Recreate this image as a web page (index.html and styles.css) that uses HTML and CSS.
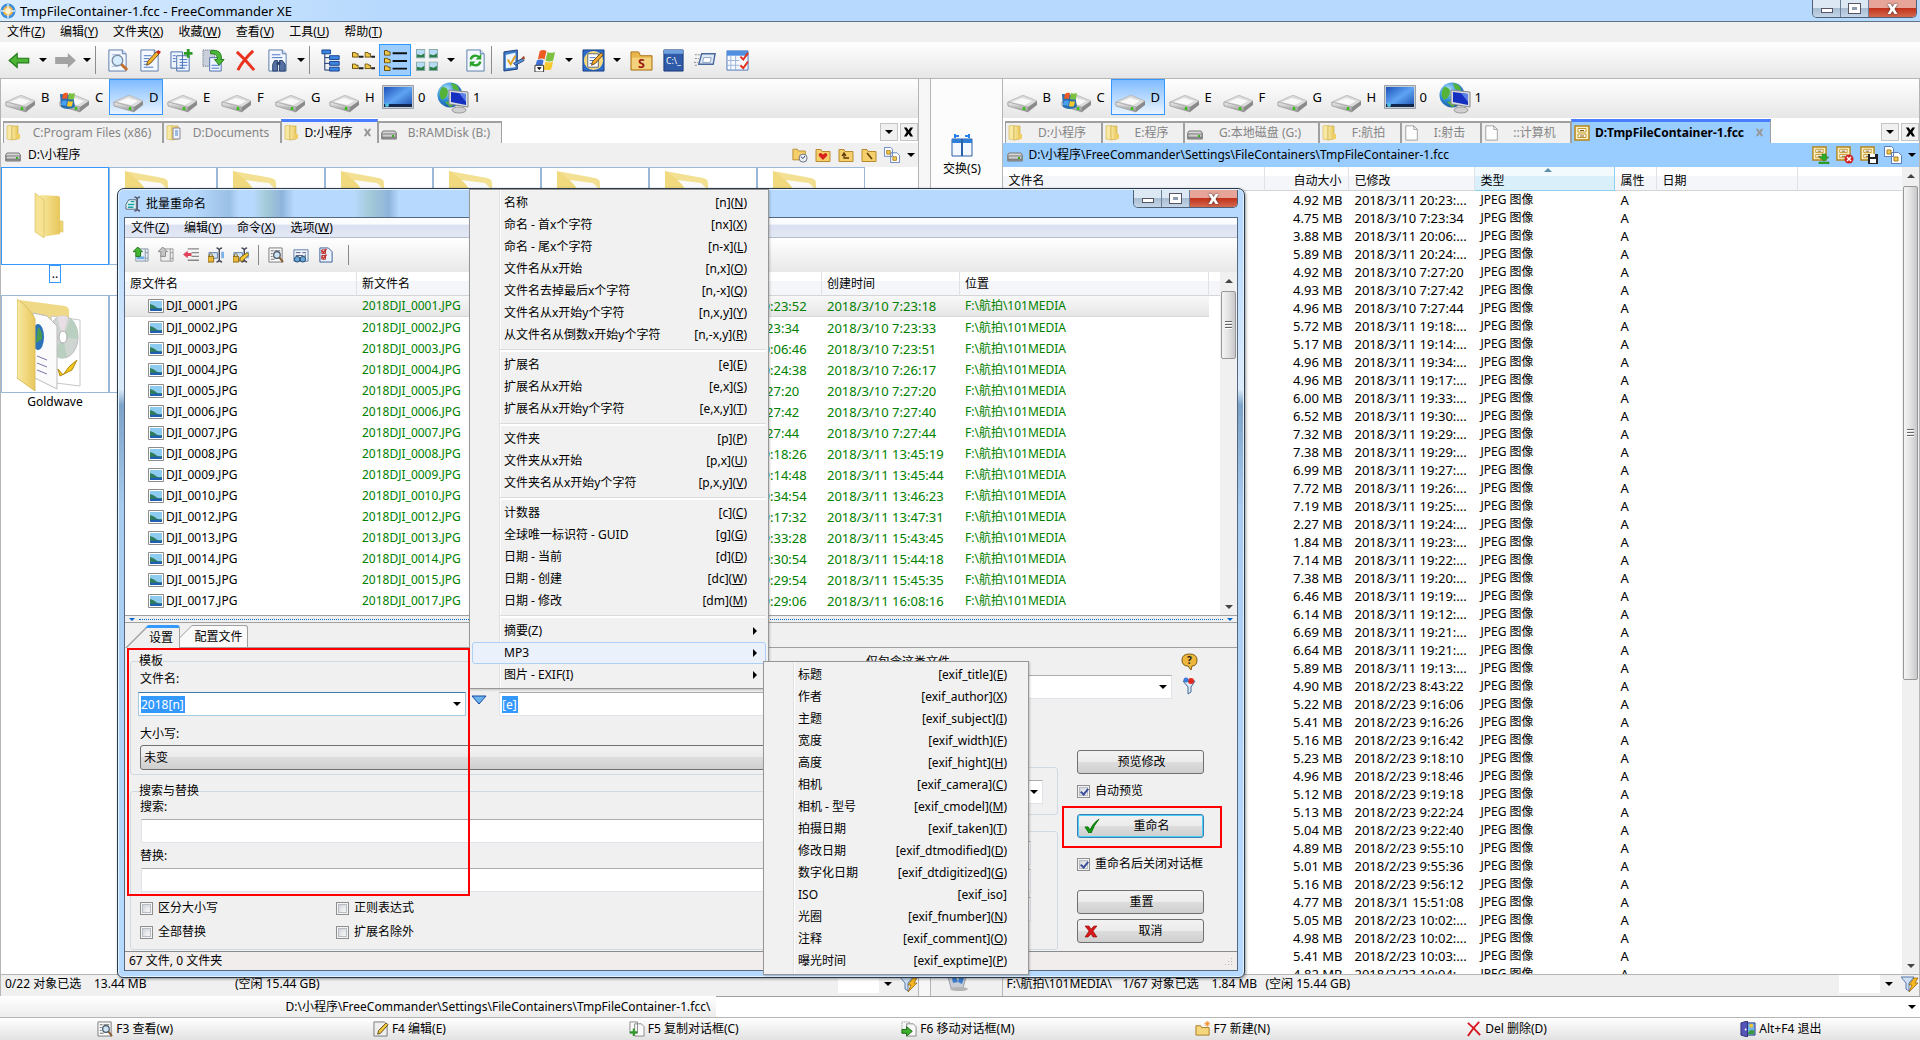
FILE: index.html
```html
<!DOCTYPE html>
<html lang="zh-CN">
<head>
<meta charset="utf-8">
<title>TmpFileContainer-1.fcc - FreeCommander XE</title>
<link rel="stylesheet" href="styles.css">
</head>
<body>
<svg class="defs" aria-hidden="true">
  <defs>
    <linearGradient id="gFolder" x1="0" y1="0" x2="1" y2="0"><stop offset="0" stop-color="#f8e9a0"/><stop offset="1" stop-color="#e8c75c"/></linearGradient>
    <linearGradient id="gMetal" x1="0" y1="0" x2="0" y2="1"><stop offset="0" stop-color="#f4f4f4"/><stop offset="1" stop-color="#8d8d8d"/></linearGradient>
    <linearGradient id="gBlue" x1="0" y1="0" x2="1" y2="1"><stop offset="0" stop-color="#1d52b8"/><stop offset=".5" stop-color="#5fa4f4"/><stop offset="1" stop-color="#1b4fae"/></linearGradient>
    <radialGradient id="gGlobe" cx=".35" cy=".3" r=".8"><stop offset="0" stop-color="#bfe9ff"/><stop offset=".5" stop-color="#2f8fd8"/><stop offset="1" stop-color="#134a96"/></radialGradient>
  </defs>
  <symbol id="app" viewBox="0 0 16 16"><circle cx="8" cy="8" r="7.5" fill="#3b8fdc"/><circle cx="8" cy="8" r="5" fill="#f7b545"/><circle cx="8" cy="8" r="3" fill="#fff3d0"/><path d="M8 1v4M8 11v4M1 8h4M11 8h4" stroke="#d9efff" stroke-width="1.5"/></symbol>
  <symbol id="back" viewBox="0 0 20 20"><path d="M1 10 8 4V8h10v4H8v4z" fill="#4db535" stroke="#1f7a15"/></symbol>
  <symbol id="fwd" viewBox="0 0 20 20"><path d="M19 10 12 3.500V7H1v6h11v3.500z" fill="#a3a3a3"/></symbol>
  <symbol id="page" viewBox="0 0 22 24"><path d="M2 1h14l4 4v18H2z" fill="#f3f8ff" stroke="#5b7ba8"/><path d="M16 1v4h4" fill="#cfe0f5" stroke="#5b7ba8"/></symbol>
  <symbol id="view" viewBox="0 0 22 24"><use href="#page"/><path d="M5 6h9M5 9h4M5 18h6" stroke="#9ab7e0"/><circle cx="11" cy="12" r="5.500" fill="#d5edff" stroke="#7f8fa3" stroke-width="1.500"/><path d="m15 16 6 6" stroke="#c0702c" stroke-width="3"/></symbol>
  <symbol id="edit" viewBox="0 0 22 24"><use href="#page"/><path d="M5 7h8M5 10h6M5 13h5M5 16h4M5 19h10" stroke="#4a73c4"/><path d="m8 17 1-4L18 3l3 2L12 15z" fill="#f3b32f" stroke="#6a4a1a"/><path d="m18 3 2-2 3 2-2 2.500z" fill="#c8281e"/></symbol>
  <symbol id="copy" viewBox="0 0 24 24"><path d="M1 3h12v17H1zM7 7h13v16H7z" fill="#eef5ff" stroke="#4a6ea8"/><path d="M10 11h8M10 14h8M10 17h8M10 20h6M3 7h3M3 10h3M3 13h3" stroke="#4a73c4"/><path d="M19 0v9M14.500 4.500h9" stroke="#2d9a25" stroke-width="3"/></symbol>
  <symbol id="move" viewBox="0 0 24 24"><path d="M1 1h12v17H1z" fill="#c9d0dc" stroke="#5a6778" stroke-dasharray="1 1"/><path d="M8 9h12v14H8z" fill="#eef5ff" stroke="#4a6ea8"/><path d="M10 17h8M10 20h8" stroke="#4a73c4"/><path d="M9 2c8-2 12 2 11 9h3l-5 6-5-6h3c0-5-2-6-7-6z" fill="#4bb83a" stroke="#1f7a15"/></symbol>
  <symbol id="del" viewBox="0 0 22 24"><path d="M2 3q9 8 18 19M19 2Q9 11 3 22" stroke="#e8321e" stroke-width="3" fill="none"/></symbol>
  <symbol id="find" viewBox="0 0 22 24"><use href="#page"/><path d="M5 6h9M5 9h11" stroke="#4a73c4"/><path d="M6 23V16l2-4h3v11zM13 23V12h3l3 4v7z" fill="#5672a5" stroke="#2a3f6b"/><path d="M10 15h4" stroke="#2a3f6b" stroke-width="3"/></symbol>
  <symbol id="tree" viewBox="0 0 22 24"><path d="M4 4v18h5M4 9h5M4 15h5" stroke="#14306e" fill="none"/><path d="M1 1h9v4H1zM9 7h10v4H9zM9 13h10v4H9zM9 19h10v4H9z" fill="#3d86e0" stroke="#17408f"/></symbol>
  <symbol id="fold" viewBox="0 0 7 6"><path d="M.5 5.500v-5h3l1 1.500h2v3.500z" fill="#f0c648" stroke="#5b4508"/></symbol>
  <symbol id="brief" viewBox="0 0 24 22"><use href="#fold" x="0" y="2" width="7" height="6"/><use href="#fold" x="13" y="2" width="7" height="6"/><use href="#fold" x="0" y="14" width="7" height="6"/><use href="#fold" x="13" y="14" width="7" height="6"/><path d="M7 7h5M20 7h4M7 19h5M20 19h4" stroke="#222" stroke-width="2"/></symbol>
  <symbol id="list" viewBox="0 0 24 22"><use href="#fold" x="0" y="0" width="7" height="6"/><use href="#fold" x="0" y="8" width="7" height="6"/><use href="#fold" x="0" y="16" width="7" height="6"/><path d="M9 3.500h15M9 11.500h15M9 19.500h15" stroke="#111" stroke-width="2"/></symbol>
  <symbol id="mini" viewBox="0 0 9 9"><path d="M.5.5h8v8h-8z" fill="#b9dcf6" stroke="#8aa"/><path d="M1 8V5l4 1 3-2v4z" fill="#2c7d45"/></symbol>
  <symbol id="thumbs" viewBox="0 0 22 22"><use href="#mini" width="9" height="9"/><use href="#mini" x="12" width="9" height="9"/><use href="#mini" y="12" width="9" height="9"/><use href="#mini" x="12" y="12" width="9" height="9"/></symbol>
  <symbol id="refresh" viewBox="0 0 22 24"><use href="#page"/><path d="M6 11c1-5 7-5 9-2M16 13c-1 5-7 5-9 2" stroke="#29a32a" stroke-width="2.500" fill="none"/><path d="M17 5v6h-6zM5 19v-6h6z" fill="#29a32a"/></symbol>
  <symbol id="check" viewBox="0 0 24 24"><path d="M2 3 16 1v20L2 23z" fill="#3d7cc9" stroke="#1d3e78"/><path d="m4 6 10-2v15L4 20z" fill="#eef6ff"/><path d="m6 11 3 5 5-9" stroke="#e0a020" stroke-width="2" fill="none"/><path d="m12 15 9-5 2 2-9 5z" fill="#5b93d8" stroke="#27497e"/><path d="m20 10 3-3 1 4z" fill="#a04020"/></symbol>
  <symbol id="win" viewBox="0 0 24 24"><path d="m6 2q4-2 7 0l-2 9q-3-2-7 0z" fill="#ee5a24"/><path d="m14 3q4 2 8 0l-2 9q-4 2-8 0z" fill="#7cc142"/><path d="m3 12q4-2 7 0l-2 8q-3-2-7 0z" fill="#3f6fd8"/><path d="m12 13q4 2 8 0l-2 8q-4 2-8 0z" fill="#f8c92c"/><path d="M1 17h9v7H1z" fill="#fff" stroke="#333"/><path d="M3 19h5l-2.500 3z"/></symbol>
  <symbol id="note" viewBox="0 0 24 24"><path d="M1 1h22v22H1z" fill="#2d6cc8" stroke="#173e86"/><circle cx="12" cy="12" r="10" fill="#f8da7c"/><path d="M6 5h11v14H6z" fill="#fff" stroke="#567"/><path d="M8 9h6M8 12h5M8 15h4" stroke="#4a73c4"/><path d="m10 17 1-4 9-9 2 2-8 9z" fill="#f3a82f" stroke="#6a4a1a"/></symbol>
  <symbol id="sfolder" viewBox="0 0 24 24"><path d="M1 22V3h8l2 4h12v15z" fill="#e9b64b" stroke="#a8741b"/><path d="M2 21V9h20v12z" fill="#f5d27e"/><text x="12" y="20" text-anchor="middle" font-size="13" font-weight="700" font-family="Noto Sans, sans-serif" fill="#9b1b10">S</text></symbol>
  <symbol id="cmd" viewBox="0 0 22 24"><path d="M1 1h20v22H1z" fill="#2f5aa8" stroke="#1c3a78"/><path d="M1 1h20v4H1z" fill="#6fa0e0"/><text x="11" y="16" text-anchor="middle" font-size="9" font-family="Noto Sans, sans-serif" fill="#fff">C:\_</text></symbol>
  <symbol id="ghost" viewBox="0 0 24 20"><path d="M8 3h14l-2 11H5z" fill="#dfe9f6" stroke="#4b6a9b" stroke-width="1.500"/><path d="M10 7h8l-1 5H9z" fill="#fff" stroke="#8aa2c4"/><path d="M1 4h5M1 8h4M0 12h4M1 15h3" stroke="#888" stroke-dasharray="2 1"/></symbol>
  <symbol id="cal" viewBox="0 0 24 24"><path d="M1 2h22v20H1z" fill="#f6faff" stroke="#4a76b8"/><path d="M1 2h22v5H1z" fill="#4f8ee0"/><path d="M1 12h13M1 17h13M5 7v15M10 7v15" stroke="#9bb4d8"/><path d="m15 8 3 3 5-7M15 17l3 3 5-7" stroke="#e0301e" stroke-width="2" fill="none"/></symbol>
  <symbol id="drive" viewBox="0 0 30 24"><path d="M1 12 14 6q2-1 4 0l12 5-9 7-20-3z" fill="#dcdcdc" stroke="#adadad" stroke-width=".7"/><path d="M5 12 15 8l10 3-7 4z" fill="#f9f9f9"/><path d="M1 12v4l20 6v-5z" fill="url(#gMetal)" stroke="#999" stroke-width=".7"/><path d="m21 17 9-6v4l-9 7z" fill="#8a8a8a"/><path d="M17 17v3" stroke="#3cc01a" stroke-width="2.500"/></symbol>
  <symbol id="cdrive" viewBox="0 0 30 24"><use href="#drive"/><path d="M1 4 14 5l2 12q-8 4-14 0z" fill="#2a6fb0"/><path d="m4 4q2-2 5-1l-1 6q-3-1-5 0z" fill="#ee5a24"/><path d="m10 3q3 1 6 0l-1 6q-3 1-6 0z" fill="#7cc142"/><path d="m3 11q2-1 5 0l-1 5q-2-1-5-1z" fill="#4aa0f0"/><path d="m9 11q3 1 5 0l-1 5q-2 1-5 0z" fill="#f8c92c"/></symbol>
  <symbol id="mon" viewBox="0 0 32 24"><path d="M.5.5h31v23H.5z" fill="#c9cdd4" stroke="#9aa0a8"/><path d="M2 2h28v20H2z" fill="url(#gBlue)"/><path d="M2 19h28v3H2z" fill="#12284e"/><circle cx="5" cy="20" r="2" fill="#50c0e0"/></symbol>
  <symbol id="net" viewBox="0 0 32 32"><circle cx="13" cy="13" r="12.500" fill="url(#gGlobe)"/><path d="M5 5q6 0 6 5t-6 8q-5-6 0-13zM14 1q8 1 8 8l-6-2zM8 20q5-2 8 4l-3 1z" fill="#55b33a"/><path d="m12 8 19 2v15l-19-3z" fill="#d8dce2" stroke="#888"/><path d="m14 10 15 2v11l-15-3z" fill="#1530c0"/><path d="m22 11 7 1v8z" fill="#5a80e8"/><ellipse cx="22" cy="28" rx="7" ry="3" fill="#d0d0d0" stroke="#999"/></symbol>
  <symbol id="hd" viewBox="0 0 16 16"><path d="M2 6h12l2 3v4q0 1-1 1H1q-1 0-1-1V9z" fill="#d8d8d8" stroke="#777"/><path d="M1 9h14v4H1z" fill="url(#gMetal)" stroke="#6f6f6f"/><path d="M11 10h2v2h-2z" fill="#39b01b"/></symbol>
  <symbol id="fold16" viewBox="0 0 16 16"><path d="M1 1 6 0v15l-5-1z" fill="#f7e9a4" stroke="#d9bc5c" stroke-width=".7"/><path d="M6 1h6v13l-6 1z" fill="url(#gFolder)" stroke="#d0ae48" stroke-width=".7"/><path d="M11 9h3v5h-3z" fill="#f0cf62"/></symbol>
  <symbol id="doc16" viewBox="0 0 16 16"><use href="#fold16"/><path d="M7 3h7v11H7z" fill="#eef4fb" stroke="#889"/><path d="M9 6h3M9 8h3M9 10h3" stroke="#4a80c0"/></symbol>
  <symbol id="blank" viewBox="0 0 16 18"><path d="M1 1h9l4 4v12H1z" fill="#fff" stroke="#9a9a9a"/><path d="M10 1v4h4" fill="none" stroke="#9a9a9a"/></symbol>
  <symbol id="cab" viewBox="0 0 16 16"><path d="M1 1h14v14H1z" fill="#fdf1c4" stroke="#b48518" stroke-width="1.500"/><path d="M4 3.500h8v3.500H4zM4 9h8v3.500H4z" fill="#fff" stroke="#c2982e"/><path d="M6 5.500h4M6 11h4" stroke="#7a5a12"/></symbol>
  <symbol id="cabdown" viewBox="0 0 18 18"><use href="#cab" width="15" height="15"/><path d="M10 8h4v3h3l-5 4-5-4h3zM7 16h10v2H7z" fill="#2fae25" stroke="#156b10" stroke-width=".5"/></symbol>
  <symbol id="cabx" viewBox="0 0 18 18"><use href="#cab" width="15" height="15"/><circle cx="13" cy="13" r="4.500" fill="#d02222"/><path d="m11 11 4 4m0-4-4 4" stroke="#fff" stroke-width="1.500"/></symbol>
  <symbol id="cabs" viewBox="0 0 18 18"><use href="#cab" width="15" height="15"/><path d="M8 8h10v10H8z" fill="#222"/><path d="M10 8h5v3h-5zM10 13h6v4h-6z" fill="#fff"/></symbol>
  <symbol id="fy" viewBox="0 0 16 16"><path d="M1 14.500V2.500h5l1 2h8v10z" fill="#f4cf6a" stroke="#b88b2e"/></symbol>
  <symbol id="fclock" viewBox="0 0 18 18"><use href="#fy" width="16" height="16"/><circle cx="12.500" cy="12.500" r="4.500" fill="#e9f1fa" stroke="#667"/><path d="m10 11 2.500 2 2-3" stroke="#335" fill="none"/></symbol>
  <symbol id="fheart" viewBox="0 0 16 16"><use href="#fy"/><path d="M8 13 4 9q-1-3 2-3l2 1.500L10 6q3 0 2 3z" fill="#d8221e"/></symbol>
  <symbol id="fup" viewBox="0 0 16 16"><use href="#fy"/><path d="M6 7v4h5M4 9l2-3 2 3" stroke="#5b3a08" fill="none" stroke-width="1.300"/></symbol>
  <symbol id="froot" viewBox="0 0 16 16"><use href="#fy"/><path d="m6 6 5 6" stroke="#5b3a08" stroke-width="1.500"/></symbol>
  <symbol id="dup" viewBox="0 0 18 18"><path d="M.5.5h7l2 2v8h-9zM7.500 6.500h7l3 3v8h-10z" fill="#fff" stroke="#5a7cb8"/><path d="M3 4h4v4H3zM10 11h4v4h-4z" fill="#f6cf50" stroke="#a87b22"/></symbol>
  <symbol id="swap" viewBox="0 0 22 24"><path d="M1 6h20v17H1z" fill="#f3f8fe" stroke="#2a5faa"/><path d="M1 6h20v4H1z" fill="#2f7ed8"/><path d="M11 6v17" stroke="#2a5faa" stroke-width="2"/><path d="M4 5V1M4 3h4M18 5V1M18 3h-4" stroke="#2583f0" stroke-width="2"/></symbol>
  <symbol id="bin" viewBox="0 0 24 14"><path d="M3 0h18l-3 11q-6 4-12 0z" fill="#c8ccd4" stroke="#9a9ea6"/><path d="m7 1 4-1 2 5-5 1zM14 1h5l-2 6-4-2z" fill="#3f7fd0"/><ellipse cx="14" cy="12" rx="9" ry="2" fill="#b4b4b4"/></symbol>
  <symbol id="filter" viewBox="0 0 18 18"><path d="M0 2h13L8 8v8l-3-2V8z" fill="#cfe0f4" stroke="#5b7ba8"/><path d="m13 3-5 7h3l-3 7 9-9h-3l3-5z" fill="#f8b81e" stroke="#8e5c08" stroke-width=".7"/></symbol>
  <symbol id="ren" viewBox="0 0 17 17"><path d="M4 4h8v10H1V9z" fill="#e8f6f8" stroke="#567"/><path d="M3 9h7M3 12h6M6 6h4" stroke="#16a0a8" stroke-width="1.500"/><path d="M10 1q2 0 3 2 1-2 3-2M10 16q2 0 3-2 1 2 3 2M13 3v11" stroke="#556" stroke-width="1.500" fill="none"/></symbol>
  <symbol id="d1" viewBox="0 0 17 17"><path d="M5 2h11v13H3V9" fill="#e8eef4" stroke="#8a98a8"/><path d="M13 2v13M13 6h3M13 12h3" stroke="#8a98a8"/><path d="M4 10h8v3H4z" fill="#6fb0e8"/><path d="M5 0 0 5h3v5h5V5h2z" fill="#44b432" stroke="#1c7414"/></symbol>
  <symbol id="d2" viewBox="0 0 17 17"><path d="M5 2h11v13H3V9" fill="#ededed" stroke="#999"/><path d="M13 2v13M13 6h3M13 12h3" stroke="#999"/><path d="M5 0 0 5h3v5h5V5h2z" fill="#c4c4c4" stroke="#888"/></symbol>
  <symbol id="d3" viewBox="0 0 17 17"><path d="M5 2h12M9 6h8M9 10h8M5 14h12" stroke="#888" stroke-width="1.500"/><path d="M0 8 5 4v2.500h4v3H5V12z" fill="#e04058"/></symbol>
  <symbol id="d4" viewBox="0 0 17 17"><path d="M1 6h9v6H1z" fill="#d5e6f8" stroke="#567ba8"/><path d="M9 1q2 0 3 2 1-2 3-2M9 16q2 0 3-2 1 2 3 2M12 3v11" stroke="#445" stroke-width="1.500" fill="none"/><path d="M14 5h3v7h-3z" fill="#7fb2e8"/><path d="M0 10h6v6H0z" fill="#e8b93a" stroke="#8a6a14"/><path d="M1.500 10V8q1.500-2 3 0v2" stroke="#8a6a14" fill="none"/></symbol>
  <symbol id="d5" viewBox="0 0 17 17"><use href="#d4"/><path d="m7 15 1-4 7-5 2 2-7 7z" fill="#f5c838" stroke="#7a5a12"/></symbol>
  <symbol id="d6" viewBox="0 0 17 17"><path d="M1 1h14v15H1z" fill="#fafafa" stroke="#777"/><path d="M3 4h3M7 4h6M3 7h2M3 10h2M3 13h4" stroke="#666"/><circle cx="9.500" cy="8.500" r="3.500" fill="#cfe4f4" stroke="#456" stroke-width="1.300"/><path d="m12 11 4 5" stroke="#8a5a30" stroke-width="2"/></symbol>
  <symbol id="d7" viewBox="0 0 17 17"><path d="M1 3h15v12H1z" fill="#f1f7fd" stroke="#5b7ba8"/><path d="M3 6h5M10 6h4M3 9h8" stroke="#557"/><circle cx="4.500" cy="13" r="3" fill="#6aa6d8" stroke="#246"/><circle cx="10.500" cy="13" r="3" fill="#6aa6d8" stroke="#246"/><path d="M13 11V8" stroke="#246"/></symbol>
  <symbol id="d8" viewBox="0 0 17 17"><path d="M2 1h9l4 4v11H2z" fill="#eaf2fc" stroke="#3a5c98"/><path d="m4 4 2 2 3-4M4 10l2 2 3-4" stroke="#d82a1e" stroke-width="1.500" fill="none"/><path d="M4 3h4v4H4zM4 9h4v4H4z" fill="none" stroke="#a33"/></symbol>
  <symbol id="pic" viewBox="0 0 16 14"><path d="M.5.5h15v13H.5z" fill="#fff" stroke="#8c8c8c"/><path d="M2 2h12v10H2z" fill="#8ecbf0"/><path d="M2 5q4 1 6 3t6 1v3H2z" fill="#2e7e5a"/><path d="M2 10q6-1 12 0v2H2z" fill="#2160b0"/></symbol>
  <symbol id="help" viewBox="0 0 17 18"><path d="M8.500 1q7.500 0 7.500 6t-5 6l-1 4-3-4q-6 0-6-6t7.500-6z" fill="#eeb73c" stroke="#7d5a12"/><text x="8.500" y="11" text-anchor="middle" font-size="10" font-weight="700" font-family="Noto Sans, sans-serif" fill="#222">?</text></symbol>
  <symbol id="funnel" viewBox="0 0 14 18"><path d="M1 4h12L9 10v5l-3 2v-7z" fill="#dbe8f6" stroke="#456a9c"/><circle cx="9" cy="4" r="3" fill="#e02a20"/><circle cx="4" cy="3" r="2.500" fill="#3b7ad8"/></symbol>
  <symbol id="tick" viewBox="0 0 16 14"><path d="M1 8h3l2 3Q9 4 15 0q-5 6-8 14H5z" fill="#12a012" stroke="#087008"/></symbol>
  <symbol id="cross" viewBox="0 0 14 13"><path d="M1 1h4l2 3 3-3h3L9 6l4 6H9L7 9l-3 3H1l4-6z" fill="#d81818" stroke="#8c0c0c" stroke-width=".6"/></symbol>
  <symbol id="x" viewBox="0 0 12 10"><path d="M1 0h3l2 3 2-3h3L8 5l3 5H8L6 7l-2 3H1l3-5z" fill="currentColor"/></symbol>
  <symbol id="f3" viewBox="0 0 17 17"><use href="#d6"/></symbol>
  <symbol id="f4" viewBox="0 0 17 17"><path d="M1 1h11l3 3v12H1z" fill="#eee" stroke="#777"/><path d="m5 14 1-4 8-8 2 2-8 9z" fill="#f3c83a" stroke="#5a4a1a"/></symbol>
  <symbol id="f5" viewBox="0 0 17 17"><path d="M1 1h8v12H1zM6 3h7l3 3v10H6z" fill="#fafafa" stroke="#888"/><path d="M5 8v8M1 12h8" stroke="#2a9a20" stroke-width="2"/></symbol>
  <symbol id="f6" viewBox="0 0 17 17"><path d="M1 1h8v12H1z" fill="none" stroke="#888" stroke-dasharray="1 1"/><path d="M6 3h7l3 3v10H6z" fill="#fafafa" stroke="#888"/><path d="M1 9h5V6l6 5-6 5v-3H1z" fill="#3fb02c" stroke="#186c10"/></symbol>
  <symbol id="f7" viewBox="0 0 17 17"><path d="M1 15V5h5l1 2h8v8z" fill="#f5d67c" stroke="#a87b22"/><path d="M13 0v6M10 3h6M11 1l4 4M15 1l-4 4" stroke="#f08a1c"/></symbol>
  <symbol id="f8" viewBox="0 0 17 17"><path d="M2 2q7 6 13 13M14 1Q7 8 2 16" stroke="#d8141e" stroke-width="2" fill="none"/></symbol>
  <symbol id="exit" viewBox="0 0 17 17"><path d="M7 2h9v13H7z" fill="#6fb4e8" stroke="#3a3a88"/><path d="M8 14q2-6 7-4v4z" fill="#3a9a40"/><circle cx="12" cy="5" r="2" fill="#f4c430"/><path d="m1 2 7-2v17l-7-2z" fill="#5555b8" stroke="#2c2c78"/><circle cx="6" cy="9" r="1" fill="#fff"/></symbol>
  <symbol id="openf" viewBox="0 0 30 46"><path d="M6 2 24 3q2 0 2 2v36l-18 3z" fill="url(#gFolder)"/><path d="M1 0 10 7v38L1 39z" fill="#f6e293" stroke="#d8bc5a" stroke-width=".6"/><path d="M26 28h3v11h-3z" fill="#f2d978" stroke="#d8bc5a" stroke-width=".6"/></symbol>
  <symbol id="gold" viewBox="0 0 64 92"><path d="M2 1 48 7q4 1 4 5v16H20z" fill="#efd886"/><path d="M34 17l29 4v66l-24-3z" fill="#fff" stroke="#c8c8c8"/><ellipse cx="46" cy="38" rx="15" ry="21" fill="#cfd5d0" stroke="#bbb"/><path d="M46 38 54 19q8 8 7 21zM46 38 36 55q6 7 14 3z" fill="#b9cfc0"/><path d="M46 38 40 18q6-3 11 0z" fill="#e8dfe6"/><ellipse cx="46" cy="38" rx="4" ry="6" fill="#fff" stroke="#aaa"/><path d="m16 14 14 3 10 10v63L16 78z" fill="#fbfbfb" stroke="#bbb"/><ellipse cx="21" cy="38" rx="6" ry="13" fill="#2b72b8"/><path d="M21 28q5 4 4 12l-6 4z" fill="#4a9a50"/><path d="M20 57l10 4M20 64l10 4M20 71l10 4" stroke="#77a"/><path d="m41 70 5 6q5-9 14-15l-5 10-12 6z" fill="#f2c81e" stroke="#b08a10"/><path d="M0 0q14 10 18 20v72L0 79z" fill="url(#gFolder)" stroke="#dcc062"/></symbol>
  <symbol id="peek" viewBox="0 0 44 18"><path d="M0 0 38 7q5 1 5 5v6H0z" fill="#f3e092"/><path d="M12 9 36 12l6 6H20z" fill="#fafafa"/><path d="M0 0q15 9 20 18H0z" fill="#f0d97e"/></symbol>
</svg>

<div class="app">
  <header class="titlebar">
    <svg class="i16"><use href="#app"/></svg><span class="grow">TmpFileContainer-1.fcc - FreeCommander XE</span>
    <div class="winbtns"><button class="wb min" aria-label="最小化"><i></i></button><button class="wb max" aria-label="还原"><i></i></button><button class="wb close" aria-label="关闭"><svg width="13" height="10"><use href="#x"/></svg></button></div>
  </header>
  <nav class="menubar"><a href="#">文件(<u>Z</u>)</a><a href="#">编辑(<u>Y</u>)</a><a href="#">文件夹(<u>X</u>)</a><a href="#">收藏(<u>W</u>)</a><a href="#">查看(<u>V</u>)</a><a href="#">工具(<u>U</u>)</a><a href="#">帮助(<u>T</u>)</a></nav>
  <div class="toolbar" id="toolbar"></div>

  <main class="panes">
    <section class="pane left">
      <div class="drives"></div>
      <div class="tabs">
        <a href="#" class="tab t160"><svg class="i16"><use href="#fold16"/></svg><span>C:Program Files (x86)</span></a>
        <a href="#" class="tab t118"><svg class="i16"><use href="#doc16"/></svg><span>D:Documents</span></a>
        <a href="#" class="tab t97 on"><svg class="i16"><use href="#fold16"/></svg><span>D:小程序</span><b><svg width="9" height="9"><use href="#x"/></svg></b></a>
        <a href="#" class="tab t124"><svg class="i16"><use href="#hd"/></svg><span>B:RAMDisk (B:)</span></a>
        <span class="grow"></span><button class="tbtn" aria-label="标签列表"><i class="caret"></i></button><button class="tbtn" aria-label="关闭标签"><svg width="11" height="10"><use href="#x"/></svg></button>
      </div>
      <div class="path"><svg class="i16"><use href="#hd"/></svg><span class="grow">D:\小程序</span>
        <svg class="i16"><use href="#fclock"/></svg><svg class="i16"><use href="#fheart"/></svg><svg class="i16"><use href="#fup"/></svg><svg class="i16"><use href="#froot"/></svg><svg class="i16"><use href="#dup"/></svg><i class="caret"></i></div>
      <div class="thumbgrid">
        <figure class="sel"><div class="cell mid"><svg width="30" height="46"><use href="#openf"/></svg></div><figcaption>..</figcaption></figure>
        <figure><div class="cell"><svg width="44" height="18"><use href="#peek"/></svg></div></figure>
        <figure><div class="cell"><svg width="44" height="18"><use href="#peek"/></svg></div></figure>
        <figure><div class="cell"><svg width="44" height="18"><use href="#peek"/></svg></div></figure>
        <figure><div class="cell"><svg width="44" height="18"><use href="#peek"/></svg></div></figure>
        <figure><div class="cell"><svg width="44" height="18"><use href="#peek"/></svg></div></figure>
        <figure><div class="cell"><svg width="44" height="18"><use href="#peek"/></svg></div></figure>
        <figure><div class="cell"><svg width="44" height="18"><use href="#peek"/></svg></div></figure>
        <figure><div class="cell"><svg width="64" height="92"><use href="#gold"/></svg></div><figcaption>Goldwave</figcaption></figure>
        <figure><div class="cell"></div></figure>
      </div>
      <div class="status"><span class="w89">0/22 对象已选</span><span class="w141">13.44 MB</span><span class="grow">(空闲 15.44 GB)</span><span class="combo"><i class="caret"></i></span><svg class="i18"><use href="#filter"/></svg></div>
    </section>
    <div class="gutter"></div>
    <aside class="swapcol"><button><svg width="22" height="24"><use href="#swap"/></svg>交换(S)</button><div class="bin"><svg width="24" height="14"><use href="#bin"/></svg></div></aside>
    <section class="pane right">
      <div class="drives"></div>
      <div class="tabs">
        <a href="#" class="tab t97"><svg class="i16"><use href="#fold16"/></svg><span>D:小程序</span></a>
        <a href="#" class="tab t82"><svg class="i16"><use href="#fold16"/></svg><span>E:程序</span></a>
        <a href="#" class="tab t135"><svg class="i16"><use href="#hd"/></svg><span>G:本地磁盘 (G:)</span></a>
        <a href="#" class="tab t82"><svg class="i16"><use href="#fold16"/></svg><span>F:航拍</span></a>
        <a href="#" class="tab t80"><svg class="i16"><use href="#blank"/></svg><span>I:射击</span></a>
        <a href="#" class="tab t90"><svg class="i16"><use href="#blank"/></svg><span>::计算机</span></a>
        <a href="#" class="tab t200 on blue"><svg class="i16"><use href="#cab"/></svg><span>D:TmpFileContainer-1.fcc</span><b><svg width="9" height="9"><use href="#x"/></svg></b></a>
        <span class="grow"></span><button class="tbtn" aria-label="标签列表"><i class="caret"></i></button><button class="tbtn" aria-label="关闭标签"><svg width="11" height="10"><use href="#x"/></svg></button>
      </div>
      <div class="path active"><svg class="i16"><use href="#hd"/></svg><span class="grow">D:\小程序\FreeCommander\Settings\FileContainers\TmpFileContainer-1.fcc</span>
        <svg class="i18"><use href="#cabdown"/></svg><svg class="i18"><use href="#cabx"/></svg><svg class="i18"><use href="#cabs"/></svg><svg class="i18"><use href="#dup"/></svg><i class="caret"></i></div>
      <div class="listwrap">
        <div class="scrollbox">
          <table class="files">
            <colgroup><col class="c263"><col class="c84"><col class="c126"><col class="c140"><col class="c42"><col class="c141"><col></colgroup>
            <thead><tr><th>文件名</th><th class="num">自动大小</th><th>已修改</th><th class="sorted">类型</th><th>属性</th><th>日期</th><th></th></tr></thead>
            <tbody id="files"></tbody>
          </table>
        </div>
        <div class="vscroll"><i class="up"></i><div class="thumb big"></div><i class="down"></i></div>
      </div>
      <div class="status"><span class="w116">F:\航拍\101MEDIA\</span><span class="w89">1/67 对象已选</span><span class="w54">1.84 MB</span><span class="grow">(空闲 15.44 GB)</span><span class="combo"><i class="caret"></i></span><svg class="i18"><use href="#filter"/></svg></div>
    </section>
  </main>

  <div class="cmdline"><label for="cmdin">D:\小程序\FreeCommander\Settings\FileContainers\TmpFileContainer-1.fcc\</label><div class="cmdbox"><input id="cmdin" type="text"><i class="caret"></i></div></div>
  <footer class="fkeys">
    <button><svg class="i16"><use href="#f3"/></svg>F3 查看(w)</button><button><svg class="i16"><use href="#f4"/></svg>F4 编辑(E)</button><button><svg class="i16"><use href="#f5"/></svg>F5 复制对话框(C)</button><button><svg class="i16"><use href="#f6"/></svg>F6 移动对话框(M)</button><button><svg class="i16"><use href="#f7"/></svg>F7 新建(N)</button><button><svg class="i16"><use href="#f8"/></svg>Del 删除(D)</button><button><svg class="i16"><use href="#exit"/></svg>Alt+F4 退出</button>
  </footer>

  <div class="dialog" role="dialog" aria-label="批量重命名">
    <div class="dtitle"><svg class="i16"><use href="#ren"/></svg><span>批量重命名</span><div class="winbtns"><button class="wb min" aria-label="最小化"><i></i></button><button class="wb max" aria-label="最大化"><i></i></button><button class="wb close" aria-label="关闭"><svg width="13" height="10"><use href="#x"/></svg></button></div></div>
    <div class="client">
      <nav class="dmenu"><a href="#">文件(<u>Z</u>)</a><a href="#">编辑(<u>Y</u>)</a><a href="#">命令(<u>X</u>)</a><a href="#">选项(<u>W</u>)</a></nav>
      <div class="dtools"><svg class="i16"><use href="#d1"/></svg><svg class="i16"><use href="#d2"/></svg><svg class="i16"><use href="#d3"/></svg><svg class="i16"><use href="#d4"/></svg><svg class="i16"><use href="#d5"/></svg><i class="sep"></i><svg class="i16"><use href="#d6"/></svg><svg class="i16"><use href="#d7"/></svg><svg class="i16"><use href="#d8"/></svg><i class="sep"></i></div>
      <div class="dlist">
        <div class="dscroll">
          <table class="renames">
            <colgroup><col class="c232"><col class="c328"><col class="c137"><col class="c138"><col class="c249"><col></colgroup>
            <thead><tr><th>原文件名</th><th>新文件名</th><th>修改时间</th><th>创建时间</th><th>位置</th><th></th></tr></thead>
            <tbody id="renames"></tbody>
          </table>
        </div>
        <div class="vscroll"><i class="up"></i><div class="thumb small"></div><i class="down"></i></div>
      </div>
      <div class="splitter"><i class="caret"></i><span></span><i class="caret"></i></div>
      <div class="dtabs"><button class="dtab on">设置</button><button class="dtab">配置文件</button></div>
      <div class="settings">
        <div class="scol">
          <fieldset><legend>模板</legend>
            <label for="fname">文件名:</label>
            <div class="frow"><div class="box focus"><input id="fname" class="hl w44" type="text" value="2018[n]"><i class="caret"></i></div><button class="tri" aria-label="插入变量"><svg width="16" height="10"><path d="M1 1h14L8 9z" fill="#6bb4ee" stroke="#1648a0"/></svg></button><div class="box ext"><input class="hl w16" type="text" value="[e]" aria-label="扩展名"></div></div>
            <label for="case">大小写:</label>
            <select id="case"><option>未变</option></select>
          </fieldset>
          <fieldset class="second"><legend>搜索与替换</legend>
            <label for="srch">搜索:</label><input id="srch" class="text" type="text">
            <label for="repl">替换:</label><input id="repl" class="text" type="text">
            <div class="checks"><label><input type="checkbox">区分大小写</label><label><input type="checkbox">正则表达式</label><label><input type="checkbox">全部替换</label><label><input type="checkbox">扩展名除外</label></div>
          </fieldset>
        </div>
        <div class="rcol">
          <label for="only">仅包含这类文件</label>
          <div class="onlyrow"><div class="box"><input id="only" type="text"><i class="caret"></i></div><div class="two"><svg width="17" height="18"><use href="#help"/></svg><svg width="14" height="18"><use href="#funnel"/></svg></div></div>
          <div class="lower">
            <div class="mids"><div class="gb one"><div class="box"><input type="text" aria-label="日期"><i class="caret"></i></div></div><div class="gb three"><input class="text" type="text" aria-label="开始"><input class="text" type="text" aria-label="步长"><input class="text" type="text" aria-label="位数"></div></div>
            <div class="acts"><button class="btn">预览修改</button><label><input type="checkbox" checked>自动预览</label><button class="btn def"><svg width="16" height="14"><use href="#tick"/></svg><span>重命名</span></button><label><input type="checkbox" checked>重命名后关闭对话框</label><button class="btn">重置</button><button class="btn"><svg width="14" height="13"><use href="#cross"/></svg><span>取消</span></button></div>
          </div>
        </div>
      </div>
      <div class="dstatus"><span>67 文件, 0 文件夹</span><i class="grip"></i></div>
    </div>

    <ul class="menu m1" id="menu1"></ul>
    <ul class="menu m2" id="menu2"></ul>
    <div class="mark a"></div>
    <div class="mark b"></div>
  </div>
</div>
<script src="app.js"></script>
</body>
</html>
```
FILE: styles.css
```css
* { box-sizing: border-box; }
html, body { margin: 0; height: 100%; }
body { font: 12px/16px "Noto Sans", "Noto Sans CJK SC", sans-serif; color: #000; background: #f0f0f0; overflow: hidden; }
a { color: inherit; text-decoration: none; }
button, input, select { font: inherit; color: inherit; margin: 0; padding: 0; border: 0; background: none; }
svg { display: block; flex: none; }
.defs { position: absolute; width: 0; height: 0; }
.i16 { width: 16px; height: 16px; }
.i18 { width: 18px; height: 18px; }
.grow { flex: 1; }
.lat { font-size: 13px; }
.caret { width: 0; height: 0; border: 4px solid transparent; border-top-color: #000; border-bottom: 0; flex: none; }

.app { position: relative; height: 100vh; display: flex; flex-direction: column; }
.titlebar { height: 22px; flex: none; display: flex; align-items: center; gap: 4px; padding: 0 3px 0 0; font-size: 13px; background: linear-gradient(90deg, #dcedff, #b7d9fd 20%); border-bottom: 1px solid #5f7388; }
.winbtns { display: flex; align-self: flex-start; height: 18px; border: 1px solid #4d6078; border-top: 0; border-radius: 0 0 5px 5px; overflow: hidden; }
.wb { width: 28px; display: flex; align-items: center; justify-content: center; background: linear-gradient(#dce8f4 45%, #a9bdd2 50%, #c4d6e8); border-right: 1px solid #6b7f98; }
.wb.close { width: 47px; border: 0; color: #fff; background: linear-gradient(#e7a499 45%, #c2321c 50%, #d4694e); }
.wb.close svg { filter: drop-shadow(0 0 1px #333); }
.wb.min i { width: 12px; height: 5px; background: #fff; border: 1px solid #556; margin-top: 4px; }
.wb.max i { width: 11px; height: 9px; background: #8c9db0; border: 3px solid #fff; outline: 1px solid #556; }
.menubar { height: 20px; flex: none; display: flex; align-items: center; gap: 15px; padding: 0 7px; }
.toolbar { height: 37px; flex: none; display: flex; align-items: center; padding-left: 3px; background: linear-gradient(#fff, #e6e6e6); border-bottom: 1px solid #b5b5b5; }
.tool { width: 32px; height: 32px; display: flex; align-items: center; justify-content: center; border: 1px solid transparent; }
.tool.narrow { width: 28px; }
.tool.on { background: #9dceff; border-color: #3399ff; }
.drop { width: 16px; height: 32px; display: flex; align-items: center; justify-content: center; }
.tsep { width: 6px; height: 28px; border-left: 1px solid #8c8c8c; }

.panes { flex: 1; min-height: 0; display: flex; }
.pane { flex: 1 1 0; min-width: 0; display: flex; flex-direction: column; border: 1px solid #b5b5b5; border-width: 0 1px; }
.gutter { width: 11px; background: #f7f7f7; }
.swapcol { width: 72px; background: #fcfcfc; border-left: 1px solid #b5b5b5; display: flex; flex-direction: column; justify-content: space-between; padding-top: 54px; }
.swapcol button { display: flex; flex-direction: column; align-items: center; gap: 4px; padding-right: 8px; }
.bin { height: 19px; background: #f0f0f0; padding-left: 14px; }
.drives { height: 39px; flex: none; display: flex; background: linear-gradient(#fff, #e6e6e6); }
.drive { width: 54px; height: 36px; display: flex; padding: 9px 0 0 3px; gap: 6px; border: 1px solid transparent; font-size: 13px; }
.drive svg { margin-top: 1px; }
.drive.on { background: linear-gradient(#7fbcff, #eaf4ff); border-color: #3399ff; }
.drive.pc svg { margin-top: -4px; }
.drive.pc { padding-left: 2px; gap: 4px; }
.drive.net { padding-top: 5px; gap: 4px; }
.drive.net span { margin-top: 4px; }
.drive.net svg { margin-top: -3px; }
.tabs { height: 25px; flex: none; display: flex; align-items: flex-end; padding-left: 2px; background: #fff; }
.tab { height: 22px; display: flex; align-items: center; padding-left: 2px; background: #f0f0f0; border: 1px solid #a0a0a0; border-width: 2px 1px 0; color: #858585; overflow: hidden; }
.tab span { flex: 1; text-align: center; white-space: nowrap; }
.tab.on { height: 24px; color: #000; border-top: 3px solid #4a7dff; }
.tab.blue { background: #99ccff; font-weight: 700; }
.tab b { width: 20px; color: #999; display: flex; justify-content: center; }
.t160 { width: 160px; } .t118 { width: 118px; } .t97 { width: 97px; } .t124 { width: 124px; } .t82 { width: 82px; } .t135 { width: 135px; } .t80 { width: 80px; } .t90 { width: 90px; } .t200 { width: 200px; }
.tbtn { width: 18px; height: 18px; margin: 0 0 2px 2px; display: flex; align-items: center; justify-content: center; border: 1px solid #c4c4c4; background: #f0f0f0; }
.path { height: 24px; flex: none; display: flex; align-items: center; gap: 7px; padding: 0 3px 0 4px; }
.path.active { background: #99ccff; gap: 6px; }
.thumbgrid { flex: 1; min-height: 0; background: #fff; display: grid; grid-template-columns: repeat(8, 108px); grid-auto-rows: 128px; align-content: start; overflow: hidden; }
figure { margin: 0; text-align: center; }
.cell { height: 98px; border: 1px solid #9bb8d8; padding: 3px 0 0 15px; }
.cell.mid { padding: 25px 0 0 32px; }
.sel .cell { border-color: #3399ff; }
figcaption { display: inline-block; padding: 0 2px; border: 1px solid transparent; }
.sel figcaption { border-color: #3399ff; }
.status { height: 22px; flex: none; display: flex; align-items: center; padding: 0 0 3px 4px; border-top: 1px solid #b5b5b5; white-space: nowrap; }
.w89 { width: 89px; } .w141 { width: 141px; } .w116 { width: 116px; } .w54 { width: 54px; }
.combo { width: 58px; height: 18px; background: linear-gradient(90deg, #fff 70%, #f0f0f0 70%); display: flex; align-items: center; justify-content: flex-end; padding-right: 4px; margin-right: 4px; }

.listwrap { flex: 1; min-height: 0; display: flex; background: #fff; }
.scrollbox, .dscroll { flex: 1; min-width: 0; overflow: hidden; }
table { border-collapse: separate; border-spacing: 0; table-layout: fixed; width: 100%; }
th { font-weight: 400; text-align: left; padding: 0 6px; background: linear-gradient(#fff 40%, #f4f6f9 40%); border-right: 1px solid #dfe3e8; border-bottom: 1px solid #d5d5d5; }
td { padding: 0 6px; white-space: nowrap; overflow: hidden; }
th:last-child { border-right: 0; }
.files th { height: 24px; padding-top: 4px; }
.files td { height: 18px; line-height: 18px; padding: 0 6px; }
.files .num { text-align: right; }
.files td.lat { font-size: 13px; }
.files th.sorted { background: linear-gradient(#f3fafd 40%, #d9eff9 40%); border-right-color: #8fd0ee; border-bottom-color: #8fd0ee; position: relative; }
th.sorted::after { content: ""; position: absolute; left: 50%; top: 1px; border: 4px solid transparent; border-top: 0; border-bottom-color: #5c8fae; }
.c263 { width: 262px; } .c84 { width: 84px; } .c126 { width: 126px; } .c140 { width: 140px; } .c42 { width: 42px; } .c141 { width: 141px; }
.vscroll { width: 17px; background: #f0f0f0; display: flex; flex-direction: column; align-items: center; }
.vscroll .up, .vscroll .down { border: 4px solid transparent; margin: 7px 0 8px; }
.vscroll .up { border-bottom-color: #444; border-top: 0; }
.vscroll .down { border-top-color: #444; border-bottom: 0; margin: auto 0 6px; }
.thumb { width: 15px; border: 1px solid #979797; border-radius: 2px; background: linear-gradient(90deg, #f4f4f4, #e2e2e2 50%, #c8c8cc); display: flex; align-items: center; justify-content: center; }
.thumb::after { content: ""; width: 7px; height: 8px; background: repeating-linear-gradient(#666 0 1px, #fff 1px 2px, transparent 2px 3px); }
.thumb.big { height: 494px; }
.thumb.small { height: 68px; }

.cmdline { height: 22px; flex: none; display: flex; background: linear-gradient(#fff, #ececec); border-bottom: 1px solid #b5b5b5; }
.cmdline label { width: 37%; text-align: right; line-height: 22px; }
.cmdbox { flex: 1; margin-left: 6px; background: #fff; border-top: 1px solid #a0a0a0; display: flex; align-items: center; padding-right: 4px; }
.cmdbox input { flex: 1; }
.fkeys { height: 22px; flex: none; display: grid; grid-template-columns: repeat(7, 1fr); background: linear-gradient(#fff, #e2e2e2); }
.fkeys button { display: flex; align-items: center; justify-content: center; gap: 3px; padding: 0 4px 1px 0; }

.dialog { position: absolute; left: 117px; top: 188px; width: 1128px; padding: 0 6px 6px; border: 1px solid #2a3a4c; border-radius: 7px 7px 6px 6px; background: linear-gradient(#b7d9fd 40px, #dcebfa 200px, #7ea3c8 216px, #a9cbef 320px, #b7d9fd 700px); box-shadow: inset 0 0 0 1px #e4f1ff, 1px 1px 3px #0006; }
.dtitle { height: 27px; display: flex; align-items: center; gap: 5px; padding-left: 1px; background: linear-gradient(90deg, transparent 70px, #9bc0e5 105px, #b7d9fd 115px 130px, #a4cbd8 142px, #8fb4dc 158px, #b7d9fd 170px 230px, #a4cbd8 245px, #8fb4dc 265px, transparent 275px); margin-top: 1px; }
.dtitle .winbtns { margin-left: auto; }
.client { border: 1px solid #54697f; background: #f0f0f0; }
.dmenu { height: 20px; display: flex; align-items: center; gap: 15px; padding-left: 6px; background: linear-gradient(#fbfcfe 30%, #dbe1f1 40%, #e3e8f5); border-bottom: 1px solid #b6bccc; }
.dtools { height: 34px; display: flex; align-items: center; gap: 9px; padding: 0 0 1px 8px; background: linear-gradient(#fff, #e8e8e8); }
.dtools .sep { width: 1px; height: 20px; background: #888; }
.dtools .sep:last-child { margin-left: 5px; }
.dlist { display: flex; height: 344px; background: #fff; border-bottom: 1px solid #a0a0a0; }
.renames th { height: 24px; padding: 0 5px; }
.renames td { height: 21px; color: #008000; font-size: 13px; padding: 0 5px; }
.renames td.name { color: #000; font-size: 12px; }
.renames td.small { font-size: 12px; }
.renames tr.cur td { background: linear-gradient(#f8f8f8, #e6e6e6); border-bottom: 1px solid #d9d9d9; }
.renames tr.cur td:last-child { background: none; border: 0; }
.name svg { display: inline-block; vertical-align: -3px; margin: 0 2px 0 18px; }
.c232 { width: 232px; } .c328 { width: 328px; } .c137 { width: 137px; } .c138 { width: 138px; } .c249 { width: 249px; }
.splitter { height: 7px; display: flex; align-items: center; gap: 4px; padding: 0 4px; border-bottom: 1px solid #a0a0a0; }
.splitter .caret { border-width: 3px; border-bottom: 0; border-top-color: #0066cc; }
.splitter span { flex: 1; border-top: 1px dotted #0066cc; }
.dtabs { height: 25px; display: flex; align-items: flex-end; background: linear-gradient(#a0a0a0, #a0a0a0) right bottom / calc(100% - 54px) 1px no-repeat; }
.dtab { height: 23px; width: 68px; padding-left: 10px; border: 1px solid #a0a0a0; border-width: 1px 1px 1px 0; background: linear-gradient(135deg, #a0a0a0 8px, #fafafa 9px); clip-path: polygon(12px 0, 100% 0, 100% 100%, 0 100%, 0 12px); border-radius: 0 3px 0 0; }
.dtab.on { width: 55px; padding-left: 18px; border-top: 3px solid #3399ff; border-bottom: 0; clip-path: polygon(23px 0, 100% 0, 100% 100%, 0 100%); background: linear-gradient(135deg, #a0a0a0 15px, #f0f0f0 16px); }
.settings { display: flex; gap: 8px; padding: 5px 6px 1px 5px; height: 303px; }
.scol { width: 724px; }
fieldset { margin: 0; padding: 2px 0 4px 9px; border: 1px solid #d0dae2; border-radius: 3px; min-width: 0; height: 122px; }
fieldset.second { margin-top: 8px; height: 167px; padding-top: 0; }
legend { padding: 0; margin-left: -1px; line-height: 16px; }
fieldset > label { display: block; height: 16px; }
.frow { display: flex; margin: 5px 0 10px -2px; }
.box { height: 24px; background: #fff; border: 1px solid #e2e3ea; border-top-color: #abadb3; display: flex; align-items: center; justify-content: space-between; padding: 0 4px 0 2px; }
.box.focus { width: 328px; border-color: #a4c9e3; border-top-color: #3d7bad; }
.box.ext { flex: 1; border-right: 0; }
.hl { height: 17px; background: #3399ff; color: #fff; }
.w44 { width: 44px; } .w16 { width: 16px; }
.tri { width: 33px; padding: 0 0 8px 5px; }
select { appearance: none; width: 100%; height: 25px; margin-top: 3px; padding-left: 3px; border: 1px solid #707070; border-radius: 3px; background: linear-gradient(#f2f2f2, #ebebeb 50%, #dddddd 50%, #cfcfcf); }
.text { display: block; width: 100%; height: 24px; background: #fff; border: 1px solid #e2e3ea; border-top-color: #abadb3; }
fieldset .text { margin: 4px 0 5px 1px; }
.checks { display: grid; grid-template-columns: 196px 196px; row-gap: 8px; margin-top: 8px; }
.checks label, .acts label { display: flex; align-items: center; gap: 5px; height: 16px; white-space: nowrap; }
input[type=checkbox] { appearance: none; width: 13px; height: 13px; border: 1px solid #8e8f8f; background: #f4f4f4; box-shadow: inset 0 0 0 1px #f4f4f4, inset 0 0 0 2px #b9bec6, inset 3px 3px 5px #cdd1d6; position: relative; }
input[type=checkbox]:checked::after { content: ""; position: absolute; left: 4px; top: 1px; width: 3px; height: 6px; border: solid #3b4f9c; border-width: 0 2px 2px 0; transform: rotate(40deg); }
.rcol { flex: 1; padding-left: 4px; }
.rcol > label { display: block; line-height: 18px; }
.onlyrow { display: flex; align-items: flex-start; justify-content: space-between; padding-top: 4px; }
.onlyrow .box { width: 306px; }
.onlyrow input, .gb.one input { flex: 1; min-width: 0; }
.two { display: flex; flex-direction: column; align-items: center; gap: 6px; width: 56px; margin-top: -22px; padding-right: 28px; }
.lower { display: flex; justify-content: space-between; padding: 51px 26px 0 0; }
.mids { width: 192px; margin-top: 17px; }
.gb { border: 1px solid #d0dae2; border-radius: 3px; padding: 12px 14px; }
.gb.one { height: 48px; }
.gb.three { height: 119px; margin-top: 16px; padding: 9px 26px; display: flex; flex-direction: column; gap: 4px; }
.acts { width: 128px; display: flex; flex-direction: column; }
.btn { height: 24px; margin-right: 1px; border: 1px solid #707070; border-radius: 3px; background: linear-gradient(#f2f2f2, #ebebeb 50%, #dddddd 50%, #cfcfcf); display: flex; align-items: center; justify-content: center; padding: 0 4px 0 6px; }
.btn span { flex: 1; padding-left: 4px; }
.btn.def { border-color: #3c7fb1; box-shadow: inset 0 0 0 1px #46d0fa; }
.acts label { margin: 9px 0 15px; height: 16px; }
.acts .def + label { margin: 18px 0; }
.acts .btn:last-child { margin-top: 5px; }
.dstatus { height: 19px; display: flex; align-items: center; justify-content: space-between; padding: 0 4px; background: #f1edec; border-top: 1px solid #8c8c8c; }
.grip { width: 9px; height: 9px; background: radial-gradient(circle, #b4b4b4 1px, transparent 1px) 0 0 / 3px 3px; clip-path: polygon(100% 0, 100% 100%, 0 100%); }

.menu { position: absolute; margin: 0; padding: 2px; list-style: none; background: linear-gradient(90deg, transparent 29px, #e0e0e0 29px 30px, #fff 30px 31px, transparent 31px) #f1f1f1; border: 1px solid #979797; box-shadow: 1px 1px 2px #0003; }
.m1 { left: 351px; top: 0; width: 300px; }
.m2 { left: 645px; top: 472px; width: 266px; }
.menu li { height: 22px; display: flex; align-items: center; justify-content: space-between; padding: 0 19px 0 32px; }
.menu li.line { height: 8px; padding: 0; }
.menu li.line::after { content: ""; flex: 1; margin-left: 28px; height: 2px; border-top: 1px solid #dcdcdc; background: #fff; }
.menu li.hot { background: #eaf1fb; border: 1px solid #aecff7; border-radius: 3px; padding: 0 18px 0 31px; }
.menu .more { border: 4px solid transparent; border-left-color: #000; border-right: 0; margin-right: -10px; }
.mark { position: absolute; border: 2px solid #f00; pointer-events: none; }
.mark.a { left: 9px; top: 459px; width: 343px; height: 248px; }
.mark.b { left: 944px; top: 617px; width: 160px; height: 42px; }
```
FILE: app.js
```js
const icon = (id, w, h) => `<svg width="${w}" height="${h}"><use href="#${id}"/></svg>`;

// Main toolbar: "|" is a separator, "v" a drop-down arrow.
const tools = ['back', 'v', 'fwd', 'v', '|', 'view', 'edit', 'copy', 'move', 'del', 'find', 'v', '|',
  'tree', 'brief', 'list', 'thumbs', 'v', 'refresh', '|', 'check', 'win', 'v', 'note', 'v',
  'sfolder', 'cmd', 'ghost', 'cal'];
document.getElementById('toolbar').innerHTML = tools.map(t => {
  if (t === '|') return '<i class="tsep"></i>';
  if (t === 'v') return '<span class="drop"><i class="caret"></i></span>';
  const cls = t === 'list' ? ' on' : t === 'fwd' ? ' narrow' : '';
  return `<button class="tool${cls}" aria-label="${t}">${icon(t, 23, 23)}</button>`;
}).join('');

const drives = 'BCDEFGH'.split('').map(d =>
  `<button class="drive${d === 'D' ? ' on' : ''}">${icon(d === 'C' ? 'cdrive' : 'drive', 30, 24)}<span>${d}</span></button>`).join('')
  + `<button class="drive pc">${icon('mon', 32, 24)}<span>0</span></button>`
  + `<button class="drive net">${icon('net', 32, 32)}<span>1</span></button>`;
document.querySelectorAll('.drives').forEach(el => { el.innerHTML = drives; });

const files = `4.92|3/11 20:23:...
4.75|3/10 7:23:34
3.88|3/11 20:06:...
5.89|3/11 20:24:...
4.92|3/10 7:27:20
4.93|3/10 7:27:42
4.96|3/10 7:27:44
5.72|3/11 19:18:...
5.17|3/11 19:14:...
4.96|3/11 19:34:...
4.96|3/11 19:17:...
6.00|3/11 19:33:...
6.52|3/11 19:30:...
7.32|3/11 19:29:...
7.38|3/11 19:29:...
6.99|3/11 19:27:...
7.72|3/11 19:26:...
7.19|3/11 19:25:...
2.27|3/11 19:24:...
1.84|3/11 19:23:...
7.14|3/11 19:22:...
7.38|3/11 19:20:...
6.46|3/11 19:19:...
6.14|3/11 19:12:...
6.69|3/11 19:21:...
6.64|3/11 19:21:...
5.89|3/11 19:13:...
4.90|2/23 8:43:22
5.22|2/23 9:16:06
5.41|2/23 9:16:26
5.16|2/23 9:16:42
5.23|2/23 9:18:10
4.96|2/23 9:18:46
5.12|2/23 9:19:18
5.13|2/23 9:22:24
5.04|2/23 9:22:40
4.89|2/23 9:55:10
5.01|2/23 9:55:36
5.16|2/23 9:56:12
4.77|3/1 15:51:08
5.05|2/23 10:02:...
4.98|2/23 10:02:...
5.41|2/23 10:03:...
4.82|2/23 10:04:...`.split('\n').map(r => r.split('|'));
document.getElementById('files').innerHTML = files.map(([size, date]) =>
  `<tr><td></td><td class="num lat">${size} MB</td><td class="lat">2018/${date}</td><td>JPEG 图像</td><td class="lat">A</td><td></td><td></td></tr>`).join('');

const renames = `0001|3/11 20:23:52|3/10 7:23:18
0002|3/10 7:23:34|3/10 7:23:33
0003|3/11 20:06:46|3/10 7:23:51
0004|3/11 20:24:38|3/10 7:26:17
0005|3/10 7:27:20|3/10 7:27:20
0006|3/10 7:27:42|3/10 7:27:40
0007|3/10 7:27:44|3/10 7:27:44
0008|3/11 19:18:26|3/11 13:45:19
0009|3/11 19:14:48|3/11 13:45:44
0010|3/11 19:34:54|3/11 13:46:23
0012|3/11 19:17:32|3/11 13:47:31
0013|3/11 19:33:28|3/11 15:43:45
0014|3/11 19:30:54|3/11 15:44:18
0015|3/11 19:29:54|3/11 15:45:35
0017|3/11 19:29:06|3/11 16:08:16`.split('\n').map(r => r.split('|'));
document.getElementById('renames').innerHTML = renames.map(([n, mod, made], i) =>
  `<tr${i ? '' : ' class="cur"'}><td class="name">${icon('pic', 16, 14)}DJI_${n}.JPG</td><td class="small">2018DJI_${n}.JPG</td><td>2018/${mod}</td><td>2018/${made}</td><td class="small">F:\\航拍\\101MEDIA</td><td></td></tr>`).join('');

const row = line => {
  if (line === '-') return '<li class="line"></li>';
  const [text, tag, key] = line.split('|');
  if (tag === '>') return `<li${text === 'MP3' ? ' class="hot"' : ''}>${text}<i class="more"></i></li>`;
  return `<li><span>${text}</span><span>[${tag}]${key ? `(<u>${key}</u>)` : ''}</span></li>`;
};
document.getElementById('menu1').innerHTML = ['名称|n|N', '命名 - 首x个字符|nx|X', '命名 - 尾x个字符|n-x|L',
  '文件名从x开始|n,x|O', '文件名去掉最后x个字符|n,-x|Q', '文件名从x开始y个字符|n,x,y|Y', '从文件名从倒数x开始y个字符|n,-x,y|R', '-',
  '扩展名|e|E', '扩展名从x开始|e,x|S', '扩展名从x开始y个字符|e,x,y|T', '-',
  '文件夹|p|P', '文件夹从x开始|p,x|U', '文件夹名从x开始y个字符|p,x,y|V', '-',
  '计数器|c|C', '全球唯一标识符 - GUID|g|G', '日期 - 当前|d|D', '日期 - 创建|dc|W', '日期 - 修改|dm|M', '-',
  '摘要(Z)|>', 'MP3|>', '图片 - EXIF(I)|>'].map(row).join('');
document.getElementById('menu2').innerHTML = ['标题|exif_title|E', '作者|exif_author|X', '主题|exif_subject|I',
  '宽度|exif_width|F', '高度|exif_hight|H', '相机|exif_camera|C', '相机 - 型号|exif_cmodel|M', '拍摄日期|exif_taken|T',
  '修改日期|exif_dtmodified|D', '数字化日期|exif_dtdigitized|G', 'ISO|exif_iso|', '光圈|exif_fnumber|N',
  '注释|exif_comment|O', '曝光时间|exif_exptime|P'].map(row).join('');
```
